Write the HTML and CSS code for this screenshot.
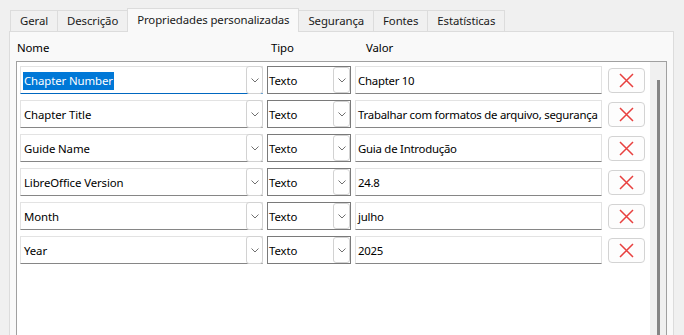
FILE: index.html
```html
<!DOCTYPE html>
<html lang="pt">
<head>
    <meta charset="UTF-8">
    <title>Propriedades personalizadas</title>
    <link rel="stylesheet" href="styles.css">
</head>
<body>
    <div class="tabs">
        <div class="tab">Geral</div>
        <div class="tab">Descrição</div>
        <div class="tab active">Propriedades personalizadas</div>
        <div class="tab">Segurança</div>
        <div class="tab">Fontes</div>
        <div class="tab">Estatísticas</div>
    </div>

    <div class="panel">
        <div class="headers">
            <span class="h-name">Nome</span>
            <span class="h-type">Tipo</span>
            <span>Valor</span>
        </div>

        <div class="listbox">
            <div class="rows" id="rows"></div>
            <div class="scrollbar"><div class="thumb"></div></div>
        </div>
    </div>

    <script>
        // propriedades do documento
        const props = [
            ['Chapter Number', 'Chapter 10'],
            ['Chapter Title', 'Trabalhar com formatos de arquivo, segurança'],
            ['Guide Name', 'Guia de Introdução'],
            ['LibreOffice Version', '24.8'],
            ['Month', 'julho'],
            ['Year', '2025']
        ];

        const chevron = '<svg width="8" height="5" viewBox="0 0 8 5"><path d="M0.5 0.5 L4 4 L7.5 0.5" fill="none" stroke="#707070" stroke-width="1"/></svg>';
        const cross = '<svg width="15" height="15" viewBox="0 0 15 15"><path d="M1 1 L14 14 M14 1 L1 14" fill="none" stroke="#e8403f" stroke-width="1.5"/></svg>';

        const rows = document.getElementById('rows');
        props.forEach((p, i) => {
            const row = document.createElement('div');
            row.className = 'row';
            const nameText = i === 0 ? '<span class="sel">' + p[0] + '</span>' : p[0];
            row.innerHTML =
                '<div class="combo name' + (i === 0 ? ' focus' : '') + '"><span class="text">' + nameText + '</span><span class="drop">' + chevron + '</span></div>' +
                '<div class="combo type"><span class="text">Texto</span><span class="drop">' + chevron + '</span></div>' +
                '<div class="value"><span class="text">' + p[1] + '</span></div>' +
                '<button class="del">' + cross + '</button>';
            rows.appendChild(row);
        });
    </script>
</body>
</html>
```

FILE: styles.css
```css
body {
    margin: 0;
    background-color: #f0f0f0;
    font-family: 'Noto Sans', 'Open Sans', sans-serif;
    font-size: 11.4px;
    letter-spacing: -0.1px;
    color: #000;
    overflow: hidden;
    height: 335px;
}
.tabs {
    display: flex;
    padding: 10px 0 0 10px;
    height: 21px;
    position: relative;
    z-index: 1;
}
.tab {
    height: 20px;
    line-height: 20px;
    padding: 0 9px;
    border: 1px solid #dcdcdc;
    border-bottom: none;
    border-right: none;
    background-color: #f0f0f0;
    color: #1a1a1a;
    white-space: nowrap;
}
.tab:last-child {
    border-right: 1px solid #dcdcdc;
}
.tab.active {
    background-color: #f9f9f9;
    margin-top: -2px;
    height: 23px;
    line-height: 22px;
    border-right: 1px solid #dcdcdc;
}
.tab.active + .tab {
    border-left: none;
}
.panel {
    margin: 0 10px 0 9px;
    border: 1px solid #dcdcdc;
    border-bottom: none;
    background-color: #f9f9f9;
    height: 303px;
    padding: 0 6px;
}
.headers {
    display: flex;
    margin: 8px 0 5px 0;
    height: 16px;
    line-height: 16px;
    padding-left: 1px;
}
.h-name {
    width: 254px;
}
.h-type {
    width: 95px;
}
.listbox {
    display: flex;
    border: 1px solid #a0a0a0;
    border-bottom: none;
    background-color: #fff;
    height: 273px;
}
.rows {
    flex: 1;
    display: flex;
    flex-direction: column;
    gap: 6px;
    padding: 4px 0 0 3px;
}
.row {
    display: flex;
    align-items: center;
    height: 28px;
}
.combo, .value {
    box-sizing: border-box;
    height: 28px;
    display: flex;
    background-color: #fff;
    border: 1px solid #e3e3e3;
    border-bottom-color: #868686;
}
.combo .text, .value .text {
    flex: 1;
    line-height: 27px;
    white-space: nowrap;
    overflow: hidden;
}
.name {
    width: 243px;
}
.name .text {
    padding-left: 3px;
}
.name.focus {
    border-bottom-color: #0067c0;
}
.sel {
    background-color: #0078d7;
    color: #fff;
    padding: 1px 1px 2px 1px;
    margin-left: -1px;
}
.type {
    width: 84px;
    margin-left: 4px;
    border-color: #7a7a7a;
}
.type .text {
    padding-left: 1px;
}
.drop {
    box-sizing: border-box;
    width: 17px;
    margin: -1px -1px -1px 0;
    border: 1px solid #d2d2d2;
    border-radius: 3px;
    background-color: #fff;
    display: flex;
    align-items: center;
    justify-content: center;
}
.type .drop {
    margin: 0;
    height: 26px;
}
.value {
    width: 247px;
    margin-left: 4px;
}
.value .text {
    padding-left: 2px;
    letter-spacing: -0.25px;
}
.del {
    margin-left: 6px;
    width: 37px;
    height: 25px;
    border: 1px solid #d3d3d3;
    border-radius: 4px;
    background-color: #fdfdfd;
    display: flex;
    align-items: center;
    justify-content: center;
    padding: 0;
}
.scrollbar {
    width: 16px;
    background-color: #f0f0f0;
    display: flex;
    flex-direction: column;
    align-items: center;
}
.thumb {
    width: 3px;
    margin-top: 18px;
    background-color: #858585;
    flex: 1;
}
```
